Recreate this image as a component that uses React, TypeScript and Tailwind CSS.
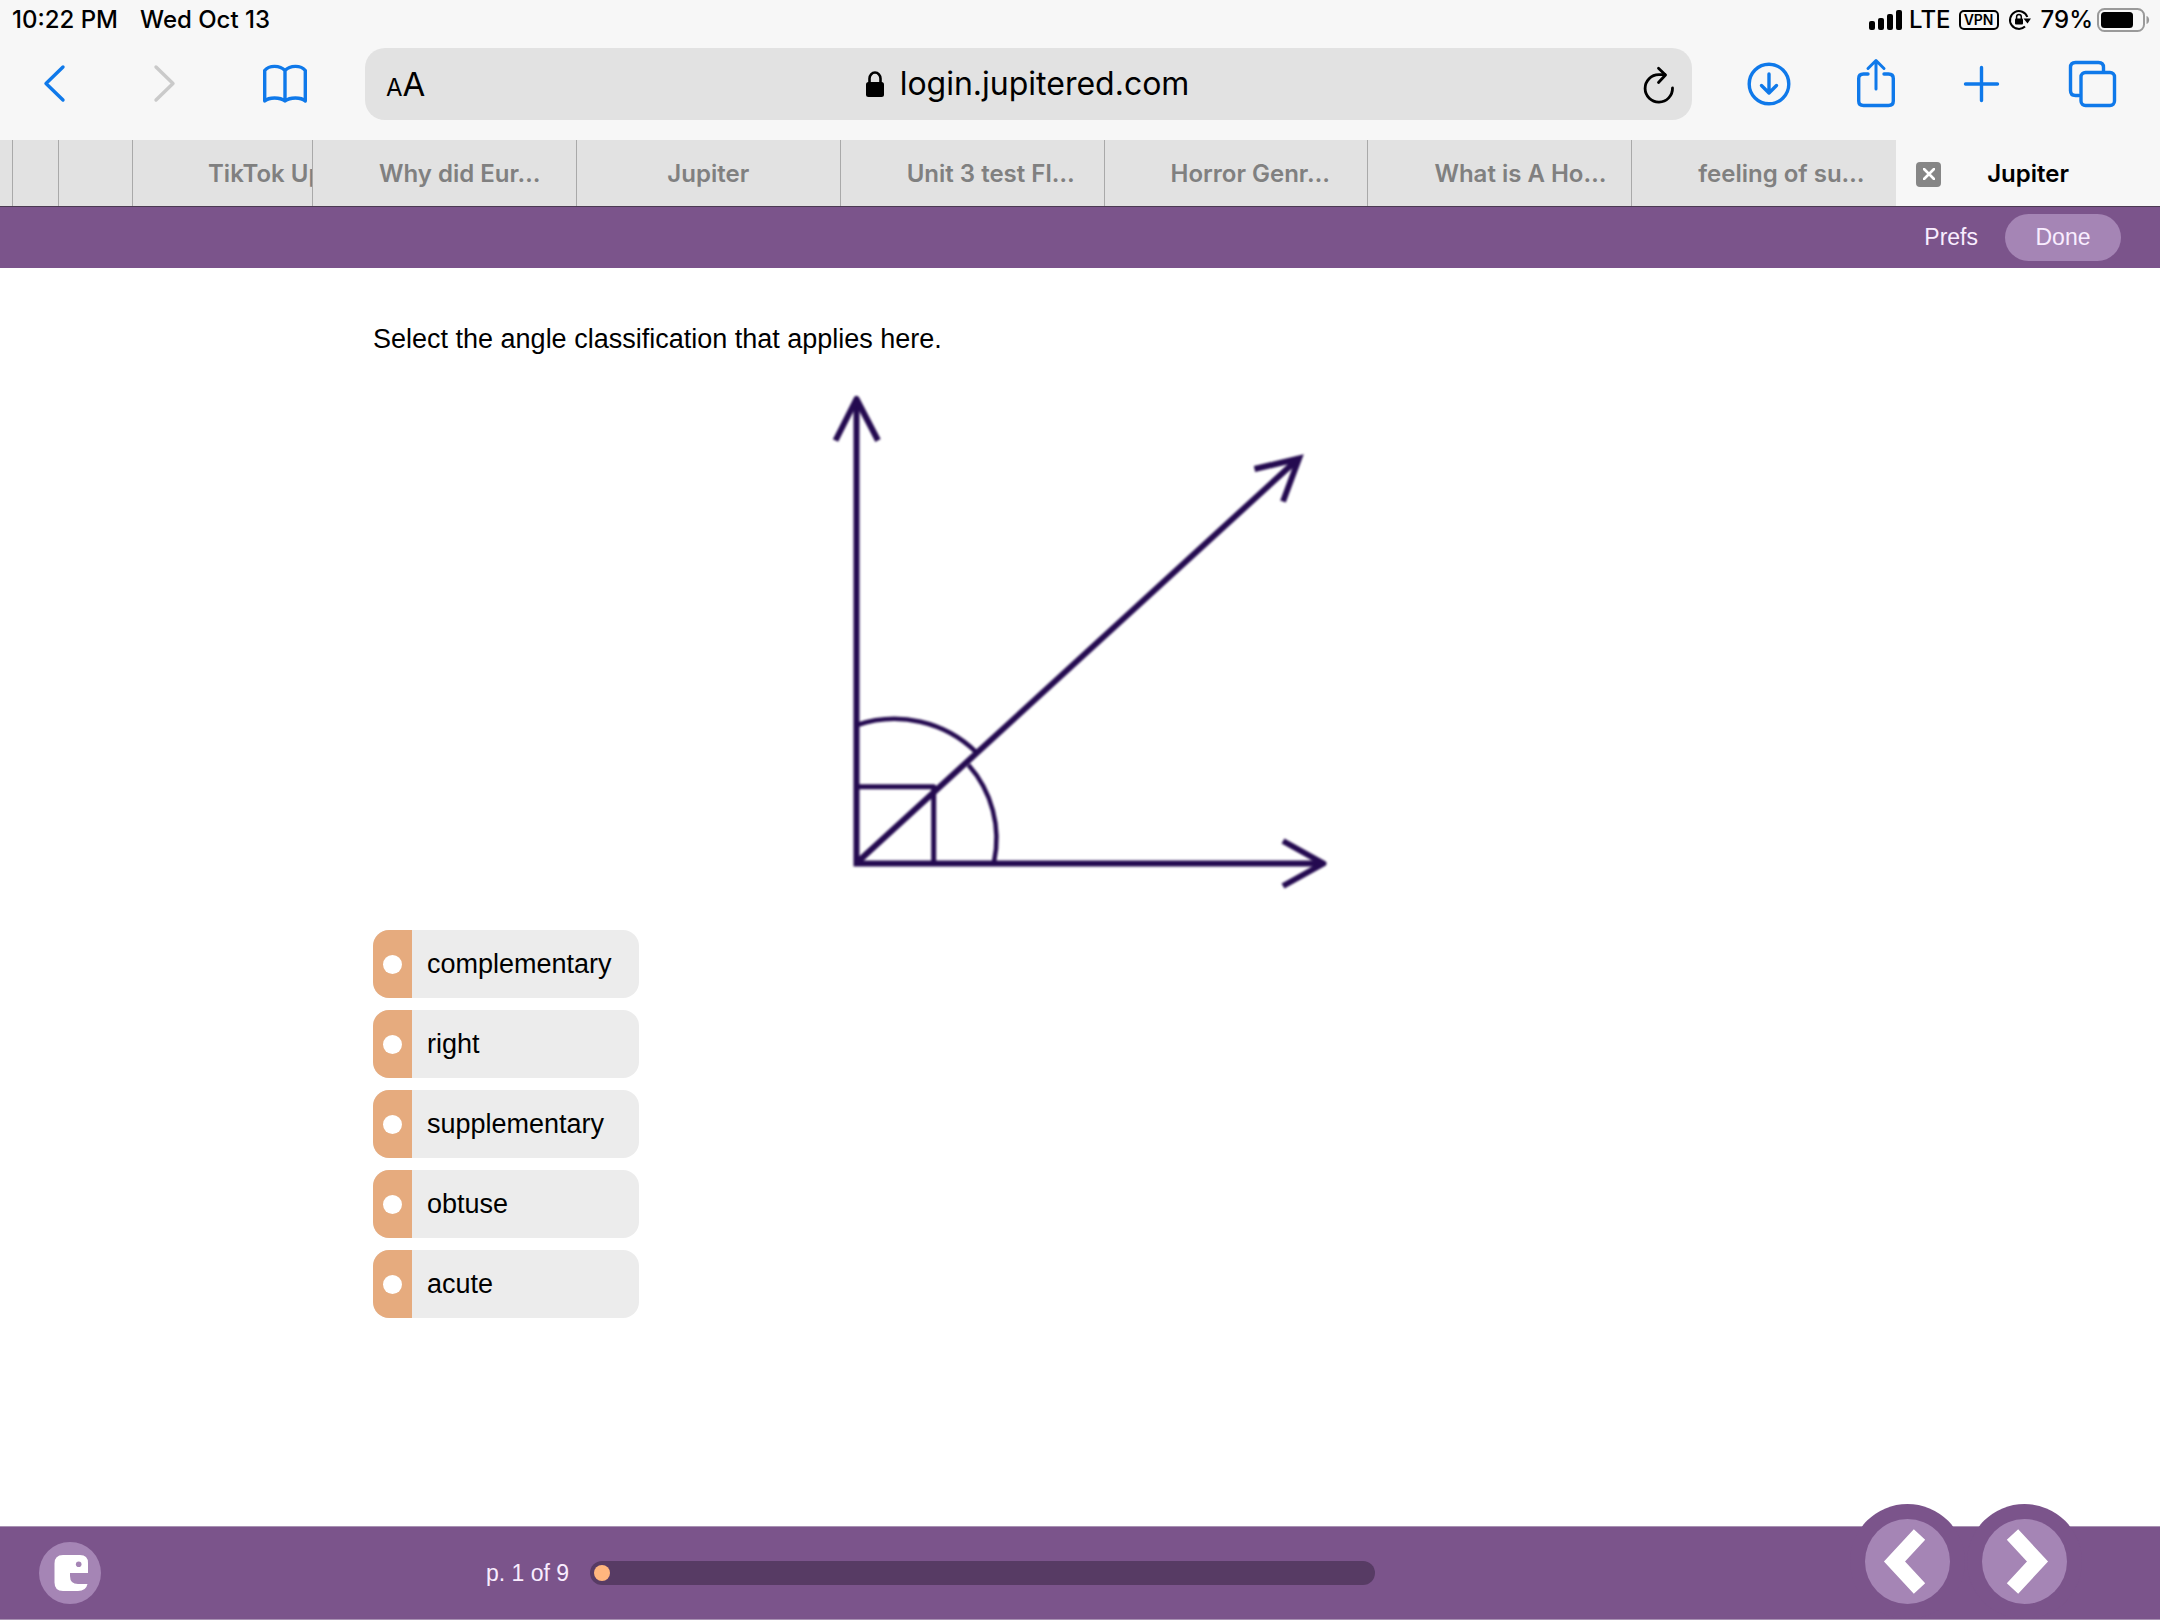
import type { ReactNode } from "react";

const BLUE = "#0f79ea";

function ToolIcon({ left, children, color = BLUE }: { left: number; children: ReactNode; color?: string }) {
  return (
    <svg
      aria-hidden="true"
      viewBox={`${left} 60 48 48`}
      className="size-12 overflow-visible"
      fill="none"
      stroke={color}
      strokeWidth="3.4"
      strokeLinecap="round"
      strokeLinejoin="round"
    >
      {children}
    </svg>
  );
}

function StatusBar() {
  return (
    <div className="flex h-10 items-center pr-[10px] pl-3 text-[24px] leading-10 font-medium text-black">
      <span>10:22 PM</span>
      <span className="ml-[22px]">Wed Oct 13</span>
      <svg aria-label="Signal" viewBox="0 0 34 20" className="ml-auto h-5 w-[34px]">
        <rect x="0" y="11" width="6" height="9" rx="2" />
        <rect x="9" y="8" width="6" height="12" rx="2" />
        <rect x="18" y="4" width="6" height="16" rx="2" />
        <rect x="27" y="0" width="6" height="20" rx="2" />
      </svg>
      <span className="ml-[6px]">LTE</span>
      <span className="ml-2 flex h-5 w-10 items-center justify-center rounded-[5px] border-2 border-black text-[14px] leading-none font-semibold">
        VPN
      </span>
      <svg aria-label="Rotation lock" viewBox="0 0 22 20" className="ml-[10px] h-5 w-[22px] overflow-visible">
        <path d="M16 16.500A8.900 8.900 0 1 1 18.300 7" fill="none" stroke="#000" strokeWidth="2" />
        <path d="M14.500 8.500h7.500l-3.500 5z" />
        <rect x="6" y="8.600" width="8" height="6" rx="1" />
        <path d="M7.600 9V6.800a2.300 2.300 0 0 1 4.700 0V9" fill="none" stroke="#000" strokeWidth="1.500" />
      </svg>
      <span className="ml-[10px]">79%</span>
      <svg aria-label="Battery" viewBox="0 0 53 24" className="ml-[4px] h-6 w-[53px]">
        <rect x="1" y="1" width="46" height="22" rx="6.5" fill="none" stroke="#9a9a9a" strokeWidth="2" />
        <rect x="4" y="4" width="32" height="16" rx="3.5" />
        <path d="M49.500 8c3.500 1 3.500 7 0 8z" fill="#9a9a9a" />
      </svg>
    </div>
  );
}

function Toolbar() {
  return (
    <div className="flex items-center pt-2 pr-[43px] pb-5 pl-[31px]">
      <button type="button" aria-label="Back">
        <ToolIcon left={31}>
          <path d="M63 67 46 83.500 63 100" />
        </ToolIcon>
      </button>
      <button type="button" aria-label="Forward" disabled className="ml-[62px]">
        <ToolIcon left={141} color="#cacaca">
          <path d="M156 67 173 83.500 156 100" />
        </ToolIcon>
      </button>
      <button type="button" aria-label="Bookmarks" className="ml-[72px]">
        <ToolIcon left={261}>
          <path d="M285 70.500C280 65 269 65 264.700 70.500V101C269 97 280 97 285 101C290 97 301 97 305.300 101V70.500C301 65 290 65 285 70.500V101" />
        </ToolIcon>
      </button>
      <div className="ml-14 flex h-[72px] min-w-0 flex-1 items-center rounded-[20px] bg-[#e2e2e2] pr-[15px] pl-[21px] text-black">
        <button type="button" aria-label="Page settings" className="flex w-[50px] items-baseline leading-none">
          <span className="text-[24px]">A</span>
          <span className="text-[33px]">A</span>
        </button>
        <div className="flex min-w-0 flex-1 items-center justify-center pr-[22px]">
          <svg aria-hidden="true" viewBox="0 0 18 26" className="h-[26px] w-[18px]">
            <rect x="0" y="11" width="18" height="15" rx="2.500" />
            <path d="M3.500 12V7.500a5.500 6 0 0 1 11 0V12" fill="none" stroke="#000" strokeWidth="2.600" />
          </svg>
          <span className="ml-4 text-[32px] leading-10">login.jupitered.com</span>
        </div>
        <button type="button" aria-label="Reload" className="flex w-9 justify-center">
          <svg
            aria-hidden="true"
            viewBox="1641 62 36 42"
            className="h-[42px] w-9"
            fill="none"
            stroke="#000"
            strokeWidth="2.800"
            strokeLinecap="round"
            strokeLinejoin="round"
          >
            <path d="M1672.500 87A13.700 13.700 0 1 1 1658.800 73.700H1665" />
            <path d="M1658.500 67.300 1665.500 74 1658.500 81.500" />
          </svg>
        </button>
      </div>
      <button type="button" aria-label="Downloads" className="ml-[53px]">
        <ToolIcon left={1745}>
          <circle cx="1769" cy="84" r="19.800" />
          <path d="M1769 74V93M1761.500 85.500 1769 93 1776.500 85.500" />
        </ToolIcon>
      </button>
      <button type="button" aria-label="Share" className="ml-[59px]">
        <ToolIcon left={1852}>
          <path d="M1868 74H1863.500Q1858.700 74 1858.700 78.500V101Q1858.700 105.500 1863.500 105.500H1888.500Q1893.300 105.500 1893.300 101V78.500Q1893.300 74 1888.500 74H1884" />
          <path d="M1876 89V61M1868 68.500 1876 60.500 1884 68.500" strokeWidth="3" />
        </ToolIcon>
      </button>
      <button type="button" aria-label="New tab" className="ml-[58px]">
        <ToolIcon left={1958}>
          <path d="M1981.500 67.500V100.500M1965.500 84H1997.500" />
        </ToolIcon>
      </button>
      <button type="button" aria-label="Show tabs" className="ml-[63px]">
        <ToolIcon left={2069}>
          <path d="M2079 95.500H2075.500Q2070.500 95.500 2070.500 90.500V67.500Q2070.500 62.500 2075.500 62.500H2098.500Q2103.500 62.500 2103.500 67.500V71" />
          <rect x="2081" y="72.500" width="33.500" height="33" rx="4.500" />
        </ToolIcon>
      </button>
    </div>
  );
}

const tabs = [
  { title: "Why did Eur…" },
  { title: "Jupiter", centered: true },
  { title: "Unit 3 test Fl…" },
  { title: "Horror Genr…" },
  { title: "What is A Ho…" },
  { title: "feeling of su…", last: true },
];

function TabStrip() {
  return (
    <nav
      aria-label="Tabs"
      className="flex h-[67px] border-b border-[#4b3a52] bg-[#e2e2e2] text-[24px] leading-8 font-semibold whitespace-nowrap text-[#808080]"
    >
      <div className="w-[13px] shrink-0 border-r border-[#a9a9a9]" />
      <div className="w-[46px] shrink-0 border-r border-[#a9a9a9]" />
      <div className="w-[74px] shrink-0 border-r border-[#a9a9a9]" />
      <button type="button" className="w-[180px] shrink-0 overflow-hidden border-r border-[#a9a9a9] pt-[2px] pl-[75px] text-left">
        TikTok Up
      </button>
      <div className="grid min-w-0 flex-1 grid-cols-7">
        {tabs.map((t) => (
          <button
            key={t.title}
            type="button"
            className={`overflow-hidden pt-[2px] ${t.centered ? "text-center" : "pl-[66px] text-left"} ${
              t.last ? "" : "border-r border-[#a9a9a9]"
            }`}
          >
            {t.title}
          </button>
        ))}
        <div className="relative flex items-center justify-center bg-[#f7f7f7] pt-[2px] text-black">
          <button
            type="button"
            aria-label="Close tab"
            className="absolute left-5 flex size-[25px] items-center justify-center rounded-[4px] bg-[#868686]"
          >
            <svg aria-hidden="true" viewBox="0 0 12 12" className="size-3" stroke="#fff" strokeWidth="2.600" strokeLinecap="round">
              <path d="M1 1 11 11M11 1 1 11" />
            </svg>
          </button>
          <span>Jupiter</span>
        </div>
      </div>
    </nav>
  );
}

function AngleDiagram() {
  return (
    <svg
      role="img"
      aria-label="Two adjacent angles that form a right angle"
      viewBox="0 0 560 540"
      className="mx-auto h-[540px] w-[560px] blur-[1px]"
      fill="none"
      stroke="#240a50"
      strokeWidth="6"
    >
      <path d="M56.500 29V493.500H522" />
      <path d="M35.500 70.500 56.500 29 78 70.500" strokeLinejoin="round" />
      <path d="M483 471 523.500 493.500 483 516" strokeLinejoin="round" />
      <path d="M56 493.500 499 88" />
      <path d="M454.500 99 499 88.500 483 131.500" />
      <path d="M57 416.700H133.700V493" strokeWidth="5" strokeLinejoin="round" />
      <path d="M57 355A117 117 0 0 1 176 382" strokeWidth="4.500" />
      <path d="M168.500 395A111 111 0 0 1 194 492" strokeWidth="4.500" />
    </svg>
  );
}

const options = ["complementary", "right", "supplementary", "obtuse", "acute"];

function NavButton({ label, points }: { label: string; points: string }) {
  return (
    <button type="button" aria-label={label} className="rounded-full bg-[#7b548b] p-[15px]">
      <svg aria-hidden="true" viewBox="0 0 85 85" className="size-[85px] rounded-full bg-[#a585b5]">
        <polyline points={points} fill="none" stroke="#fff" strokeWidth="15.500" />
      </svg>
    </button>
  );
}

export default function App() {
  return (
    <div className="flex min-h-screen flex-col bg-white font-['Liberation_Sans',Arial,sans-serif] text-black">
      <header className="bg-[#f7f7f7] font-[Inter,sans-serif]">
        <StatusBar />
        <Toolbar />
        <TabStrip />
      </header>
      <div className="flex h-[61px] items-center justify-end bg-[#7b548b] pr-[39px] text-[23px] text-[#f9edff]">
        <a href="#prefs">Prefs</a>
        <button type="button" className="ml-[27px] h-[47px] w-[116px] rounded-full bg-[#a585b5]">
          Done
        </button>
      </div>

      <main className="mx-auto w-full max-w-[1414px] pt-[55px]">
        <p id="question" className="text-[27px] leading-[32px]">
          Select the angle classification that applies here.
        </p>
        <div className="pt-[15px]">
          <AngleDiagram />
        </div>
        <div role="radiogroup" aria-labelledby="question" className="flex flex-col items-start gap-3 pt-5">
          {options.map((o) => (
            <label key={o} className="flex h-[68px] w-[266px] items-center overflow-hidden rounded-[16px] bg-[#ececec] text-[27px]">
              <span className="flex h-full w-[39px] items-center justify-center bg-[#e6ab7e]">
                <input type="radio" name="answer" value={o} className="size-[19px] appearance-none rounded-full bg-white" />
              </span>
              <span className="ml-[15px]">{o}</span>
            </label>
          ))}
        </div>
      </main>

      <footer className="mt-auto flex h-[94px] items-center border-y border-[#a992b3] bg-[#7b548b] pr-[78px] pl-[39px]">
        <button type="button" aria-label="Jupiter Ed">
          <svg aria-hidden="true" viewBox="39 1542 62 62" className="size-[62px]">
            <circle cx="70" cy="1573" r="31" fill="#a585b5" />
            <path
              d="M63 1555H80Q88 1555 88 1563V1573H70V1576Q70 1584 78 1584H87.500Q86 1591 78 1591H63Q54.500 1591 54.500 1582.500V1563.500Q54.500 1555 63 1555Z"
              fill="#fff"
            />
            <circle cx="78.700" cy="1564.300" r="2.800" fill="#a585b5" />
          </svg>
        </button>
        <span id="page" className="ml-[385px] text-[23px] text-[#f9edff]">
          p. 1 of 9
        </span>
        <div
          role="progressbar"
          aria-labelledby="page"
          aria-valuemin={0}
          aria-valuemax={9}
          aria-valuenow={1}
          className="ml-[21px] flex h-6 flex-1 items-center rounded-full bg-[#573b64] px-1"
        >
          <span className="size-4 rounded-full bg-[#ffb67e]" />
        </div>
        <div className="ml-[475px] flex gap-[2px] self-start -mt-[23px]">
          <NavButton label="Previous page" points="54.500,15.500 29.500,42.500 54.500,69.500" />
          <NavButton label="Next page" points="30.500,15.500 55.500,42.500 30.500,69.500" />
        </div>
      </footer>
    </div>
  );
}
